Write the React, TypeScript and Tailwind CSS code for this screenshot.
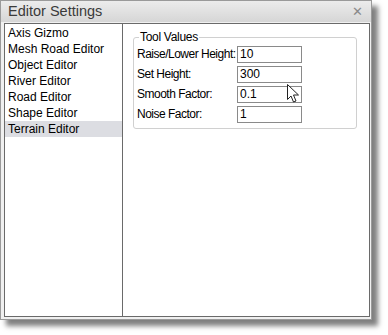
import React from "react";

const items = [
  "Axis Gizmo",
  "Mesh Road Editor",
  "Object Editor",
  "River Editor",
  "Road Editor",
  "Shape Editor",
  "Terrain Editor",
];

const rows = [
  ["Raise/Lower Height:", "10"],
  ["Set Height:", "300"],
  ["Smooth Factor:", "0.1"],
  ["Noise Factor:", "1"],
];

export default function App() {
  return (
    <div
      className="w-[388px] h-[335px] bg-white relative overflow-hidden text-[#000]"
      style={{ fontFamily: '"Liberation Sans", Arial, sans-serif' }}
    >
      <div className="w-[372px] h-[320px] border border-[#9a9a9a] bg-[#f0f0f0] flex flex-col shadow-[6px_6px_5px_rgba(0,0,0,0.5)]">
        <div className="h-[21px] flex items-center justify-between pl-[7px] pr-[8px] bg-gradient-to-b from-[#ececec] to-[#d6d6d6] shrink-0">
          <span className="text-[14.5px] text-[#3a3a3a] leading-none">Editor Settings</span>
          <span className="text-[13px] text-[#8a8a8a] leading-none">✕</span>
        </div>
        <div className="flex-1 pl-[3px] pr-[1px] pb-[2px] pt-[1px] flex">
          <div className="flex-1 flex border border-[#6a6a6a] bg-white">
            <div className="w-[118px] border-r border-[#6a6a6a] pt-[1px] shrink-0">
              {items.map((t, i) => (
                <div
                  key={t}
                  className={`h-[16px] pl-[3px] text-[12px] leading-[16px] ${
                    i === items.length - 1 ? "bg-[#dcdde2]" : ""
                  }`}
                >
                  {t}
                </div>
              ))}
            </div>
            <div className="flex-1 pl-[10px] pr-[12px] pt-[13px]">
              <div className="relative border border-[#d0d0d0] rounded-[3px] pl-[3px] pt-[6px] pb-[4px]">
                <span className="absolute -top-[8px] left-[5px] bg-white px-[1px] text-[12px] leading-[14px] tracking-[-0.3px] text-[#000]">
                  Tool Values
                </span>
                {rows.map(([l, v]) => (
                  <div key={l} className="flex items-center h-[20px]">
                    <span className="w-[100px] shrink-0 whitespace-nowrap text-[12px] leading-[14px] tracking-[-0.5px]">{l}</span>
                    <div className="w-[65px] h-[17px] border border-[#8a8a8a] text-[12px] leading-[15px] pl-[2px]">
                      {v}
                    </div>
                  </div>
                ))}
              </div>
            </div>
          </div>
        </div>
      </div>
      <svg
        className="absolute left-[287px] top-[84px]"
        width="14"
        height="20"
        viewBox="0 0 14 20"
      >
        <path
          d="M0.5 0.5 L0.5 15.5 L4 12 L6.5 18 L9 17 L6.5 11 L11.5 11 Z"
          fill="white"
          stroke="#222"
          strokeWidth="1"
          strokeLinejoin="miter"
        />
      </svg>
    </div>
  );
}
